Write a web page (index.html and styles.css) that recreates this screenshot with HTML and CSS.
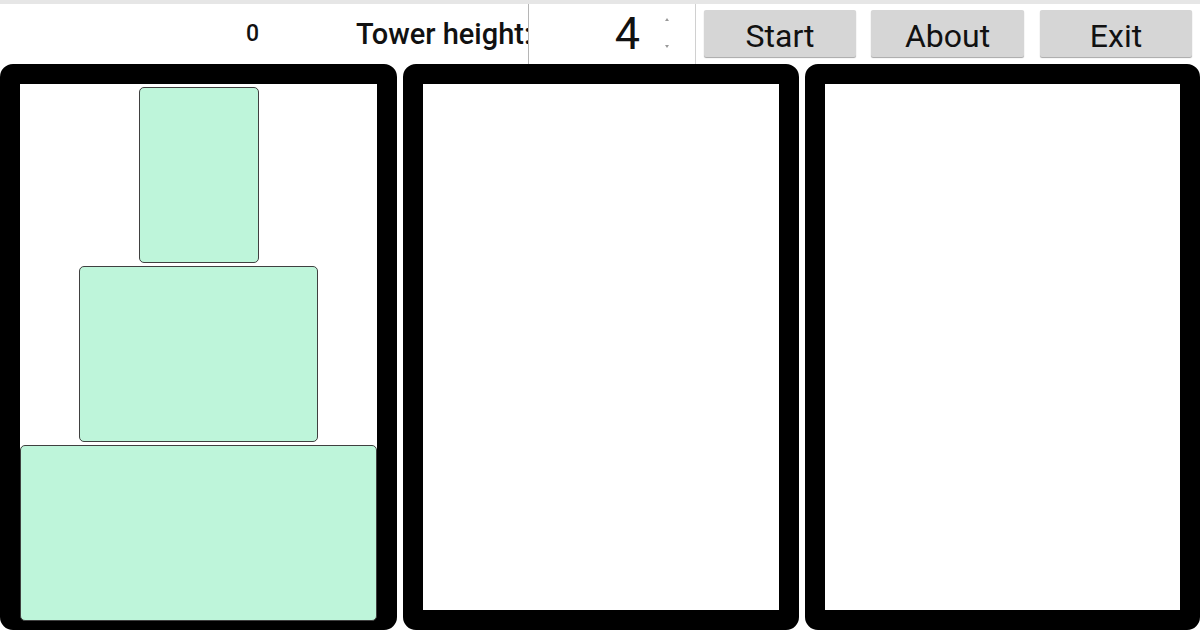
FILE: index.html
```html
<!DOCTYPE html>
<html lang="en">
<head>
  <meta charset="UTF-8">
  <title>Towers of Hanoi</title>
  <link rel="stylesheet" href="styles.css">
</head>
<body>
  <div class="topline"></div>
  <div class="toolbar">
    <div class="score">0</div>
    <div class="label">Tower height:</div>
    <div class="height-box">
      <span class="height-value">4</span>
      <span class="spinner">
        <span class="up"></span>
        <span class="down"></span>
      </span>
    </div>
    <button class="btn btn-start">Start</button>
    <button class="btn btn-about">About</button>
    <button class="btn btn-exit">Exit</button>
  </div>

  <div class="board">
    <div class="peg">
      <div class="stack">
        <div class="disk" style="width:118px"></div>
        <div class="disk" style="width:237px"></div>
        <div class="disk" style="width:355px"></div>
      </div>
    </div>
    <div class="peg">
      <div class="stack"></div>
    </div>
    <div class="peg">
      <div class="stack"></div>
    </div>
  </div>
</body>
</html>
```

FILE: styles.css
```css
body {
  margin: 0;
  background: #fff;
  font-family: Roboto, "Noto Sans", sans-serif;
  color: #111;
  overflow: hidden;
}

.topline {
  height: 4px;
  background: #e6e6e6;
}

.toolbar {
  display: flex;
  align-items: flex-start;
  height: 60px;
}

.score {
  width: 259px;
  text-align: right;
  font-size: 23px;
  font-weight: 500;
  line-height: 60px;
}

.label {
  width: 172px;
  margin-left: 97px;
  white-space: nowrap;
  overflow: hidden;
  font-size: 29px;
  font-weight: 500;
  line-height: 60px;
}

.height-box {
  width: 166px;
  height: 60px;
  border-left: 1px solid #b5b5b5;
  border-right: 1px solid #d0d0d0;
  display: flex;
  align-items: center;
  justify-content: flex-end;
}

.height-value {
  font-size: 45px;
  line-height: 60px;
  margin-right: 25px;
}

.spinner {
  display: flex;
  flex-direction: column;
  justify-content: space-between;
  height: 30px;
  margin-right: 26px;
  margin-top: -3px;
}

.spinner .up {
  border-left: 2px solid transparent;
  border-right: 2px solid transparent;
  border-bottom: 3px solid #999;
}

.spinner .down {
  border-left: 2px solid transparent;
  border-right: 2px solid transparent;
  border-top: 3px solid #999;
}

.btn {
  height: 47px;
  margin-top: 6px;
  background: #d6d6d6;
  border: none;
  border-radius: 2px;
  box-shadow: 0 1px 1px rgba(0,0,0,0.35);
  font-family: Roboto, "Noto Sans", sans-serif;
  font-size: 32px;
  color: #111;
  padding: 4px 0 0;
}

.btn-start { width: 152px; margin-left: 8px; }
.btn-about { width: 153px; margin-left: 15px; }
.btn-exit { width: 152px; margin-left: 16px; }

.board {
  display: flex;
  gap: 6px;
  height: 566px;
}

.peg {
  flex: 1;
  border: 20px solid #000;
  border-radius: 13px;
  background: #fff;
  display: flex;
  flex-direction: column;
}

.stack {
  flex: 1;
  margin-bottom: -11px;
  display: flex;
  flex-direction: column;
  justify-content: flex-end;
  align-items: center;
  gap: 3px;
}

.disk {
  height: 174px;
  background: #bef5da;
  border: 1px solid #404040;
  border-radius: 5px;
  flex-shrink: 0;
}
```
